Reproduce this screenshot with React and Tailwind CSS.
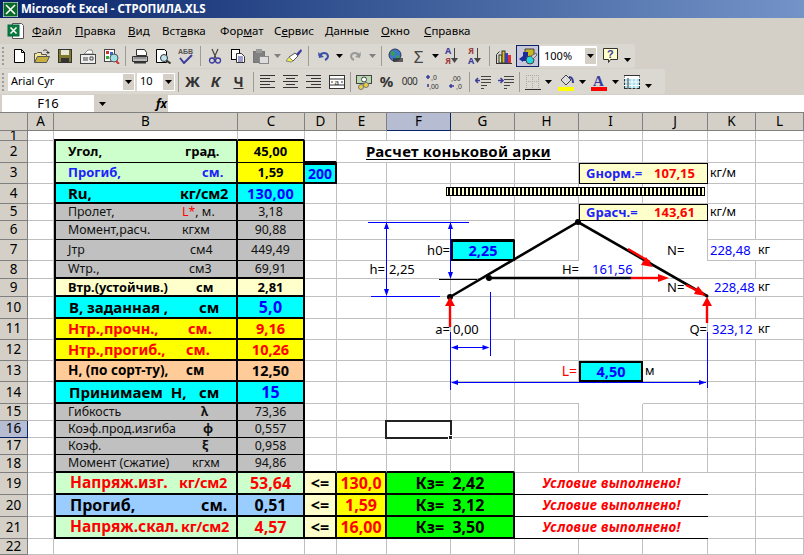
import { twMerge } from "tailwind-merge";

const colsTpl = "grid grid-cols-[28px_26px_184px_67px_32px_50px_64px_64px_64px_64px_65px_48px_48px] grid-rows-[minmax(0,1fr)]";
const letters = ["A", "B", "C", "D", "E", "F", "G", "H", "I", "J", "K", "L"];

const Svg = ({ children, w = 16, h = 16 }) => (
  <svg width={w} height={h} viewBox={"0 0 " + w + " " + h}>{children}</svg>
);

const Caret = ({ className }) => (
  <div className={twMerge("flex items-center justify-center w-[10px]", className)}>
    <svg width="7" height="4" viewBox="0 0 7 4"><path d="M0 0h7l-3.5 4z" fill="#000" /></svg>
  </div>
);
const GrayCaret = ({ className }) => (
  <div className={twMerge("flex items-center justify-center w-[10px]", className)}>
    <svg width="7" height="4" viewBox="0 0 7 4"><path d="M0 0h7l-3.5 4z" fill="#808080" /></svg>
  </div>
);
const Sep = ({ className }) => <div className={twMerge("w-[6px] flex justify-center", className)}><div className="w-px h-[20px] bg-[#a09c94]" /></div>;
const Grip = () => <div className="w-[3px] h-[18px] ml-[2px] border-l-2 border-dotted border-[#a09c94]" />;
const Btn = ({ children, className }) => <div className={twMerge("w-[23px] flex items-center justify-center", className)}>{children}</div>;

const ic = {
  xl: <Svg w={18} h={17}><path d="M5.5 1.5h9l2 2v13h-11z" fill="#fff" stroke="#555" /><rect x="1" y="3" width="11" height="11" fill="#0a7a3a" stroke="#064" /><path d="M3.5 5.5l6 6M9.5 5.5l-6 6" stroke="#fff" strokeWidth="1.5" /></Svg>,
  new: <Svg><path d="M3.5 1.5h7l3 3v10h-10z" fill="#fff" stroke="#000" /><path d="M10.5 1.5v3h3" fill="none" stroke="#000" /></Svg>,
  open: <Svg w={18}><path d="M1.5 14.5v-9h2l1-1h4v2h5v2" fill="#f4e89c" stroke="#555" /><path d="M1.5 14.5l3-6h12l-3 6z" fill="#c8b040" stroke="#555" /><path d="M10 3c2-2 4-1 5 1" fill="none" stroke="#333" /><path d="M13 4h4l-2 2z" fill="#333" /></Svg>,
  save: <Svg><rect x="1.5" y="1.5" width="13" height="13" fill="#807a30" stroke="#333" /><rect x="4" y="2" width="8" height="5" fill="#e8e8d8" /><rect x="4" y="10" width="8" height="4" fill="#333" /></Svg>,
  mail: <Svg w={18}><path d="M5 6l4-4h4l1 4z" fill="#fff" stroke="#888" /><rect x="1.5" y="6.5" width="15" height="9" fill="#eee" stroke="#444" /><path d="M4 10h5M4 12h5M11 9h3v3h-3z" stroke="#444" fill="none" /></Svg>,
  web: <Svg w={18}><rect x="2.5" y="1.5" width="10" height="12" fill="#fff" stroke="#444" /><rect x="4" y="3" width="3" height="3" fill="#c33" /><rect x="8" y="4" width="3" height="3" fill="#36c" /><rect x="4" y="8" width="3" height="3" fill="#3a3" /><circle cx="12" cy="10" r="4" fill="#9fe0e8" stroke="#555" /><path d="M14 13l3 3" stroke="#c33" strokeWidth="2" /></Svg>,
  print: <Svg w={18}><path d="M5.5 1.5h8l2 3v3h-10z" fill="#fff" stroke="#333" /><path d="M1.5 8.5h15v5h-15z" fill="#bbb" stroke="#333" /><path d="M3 14.5h12" stroke="#333" strokeWidth="2" /><path d="M3 10h12" stroke="#666" /></Svg>,
  prev: <Svg w={18}><path d="M2.5 1.5h8l2 2v11h-10z" fill="#fff" stroke="#000" /><circle cx="10" cy="10" r="3.5" fill="#bfe4f0" stroke="#333" /><path d="M12.5 12.5l4 3" stroke="#333" strokeWidth="2" /></Svg>,
  spell: <Svg w={18}><text x="1" y="6" fontSize="7" fontWeight="700" fill="#555" fontFamily="Liberation Sans">АБВ</text><path d="M3 10l4 5 8-8" fill="none" stroke="#3c3c9c" strokeWidth="2" /></Svg>,
  cut: <Svg w={14}><path d="M4 1l4 9M10 1l-4 9" stroke="#444" strokeWidth="1.2" /><circle cx="4" cy="12.5" r="2.5" fill="none" stroke="#3c3c9c" strokeWidth="1.3" /><circle cx="10" cy="12.5" r="2.5" fill="none" stroke="#3c3c9c" strokeWidth="1.3" /></Svg>,
  copy: <Svg><rect x="1.5" y="1.5" width="8" height="10" fill="#fff" stroke="#000" /><path d="M6.5 5.5h5l3 3v6h-8z" fill="#fff" stroke="#333" /><path d="M8 9h5M8 11h5M8 13h5" stroke="#3c3c9c" /></Svg>,
  paste: <Svg w={18}><rect x="1.5" y="3.5" width="11" height="11" fill="#808080" stroke="#777" /><rect x="4" y="1" width="6" height="4" fill="#999" /><rect x="7.5" y="8.5" width="9" height="7" fill="#ddd" stroke="#888" /></Svg>,
  brush: <Svg w={18}><path d="M11 6l5-5 1 2-4 5z" fill="#3c3c9c" /><path d="M4 9l6-4 3 3-5 5z" fill="#fff" stroke="#555" /><path d="M1 13l3-4 4 4-2 1z" fill="#f4f040" stroke="#888" /></Svg>,
  undo: <Svg w={14}><path d="M2 4l1 6 5-1" fill="#3c50a8" /><path d="M3 8c3-4 8-4 9 0 0 2-1 3-3 4" fill="none" stroke="#3c50a8" strokeWidth="2" /></Svg>,
  redo: <Svg w={14}><path d="M12 4l-1 6-5-1" fill="#999" /><path d="M11 8C8 4 3 4 2 8c0 2 1 3 3 4" fill="none" stroke="#999" strokeWidth="2" /></Svg>,
  globe: <Svg w={18}><circle cx="8" cy="7" r="6" fill="#3c78c8" stroke="#335" /><path d="M4 3l4 1-1 4-3-1zM9 8l3-1v3l-2 2z" fill="#3ca03c" /><path d="M6 11h10M6 13h10" stroke="#333" strokeWidth="1.5" /></Svg>,
  chart: <Svg w={18}><path d="M1.5 15.5v-9l3-3" fill="none" stroke="#333" /><rect x="4" y="7" width="3" height="8" fill="#e8e8a0" stroke="#333" /><rect x="7" y="3" width="3" height="12" fill="#d8c020" stroke="#333" /><rect x="10" y="5" width="3" height="10" fill="#3c3cc0" /><rect x="13" y="7" width="3" height="8" fill="#e03030" /><path d="M1 15.5h16" stroke="#333" /></Svg>,
  draw: <Svg w={20} h={20}><path d="M7 3h9v9H7z" fill="#c8b820" stroke="#444" /><path d="M5 6h5v9H5z" fill="#1c2c9c" /><path d="M1 13l4-3v6z" fill="#1c2c9c" /><circle cx="12" cy="14" r="4" fill="#20d8e0" stroke="#444" /><path d="M13 10l5-3 1 2-4 4z" fill="#ccc" stroke="#666" /></Svg>,
  help: <Svg w={18} h={18}><path d="M1.5 1.5h14v11h-7l-2 3v-3h-5z" fill="#ffffc8" stroke="#333" /><text x="5" y="11" fontSize="11" fontWeight="700" fill="#3c3c9c" fontFamily="Liberation Sans">?</text></Svg>,
  sum: <span className="text-[17px] leading-none text-[#444]">Σ</span>,
  alL: <Svg w={15}><path d="M0 1.5h15M0 4.5h10M0 7.5h15M0 10.5h10M0 13.5h15" stroke="#333" /></Svg>,
  alC: <Svg w={15}><path d="M0 1.5h15M3 4.5h9M0 7.5h15M3 10.5h9M0 13.5h15" stroke="#333" /></Svg>,
  alR: <Svg w={15}><path d="M0 1.5h15M5 4.5h10M0 7.5h15M5 10.5h10M0 13.5h15" stroke="#333" /></Svg>,
  merge: <Svg><rect x="0.5" y="1.5" width="15" height="13" fill="#fff" stroke="#333" /><path d="M0 5h16M0 11h16" stroke="#333" /><path d="M2 8h2M12 8h2" stroke="#333" /><text x="5.5" y="10.5" fontSize="8" fill="#333" fontFamily="Liberation Sans">a</text></Svg>,
  cur: <Svg><rect x="0.5" y="1.5" width="15" height="8" fill="#b8d8b0" stroke="#444" /><circle cx="8" cy="5.5" r="2.5" fill="#fff" stroke="#444" /><circle cx="10" cy="11" r="2.5" fill="#e8d040" stroke="#777" /><circle cx="5" cy="13" r="2.5" fill="#e8d040" stroke="#777" /></Svg>,
  incD: <Svg><path d="M3 1v4M1 3h4M3 13v-3" stroke="#3c3c9c" strokeWidth="1.6" /><text x="6" y="6" fontSize="7" fill="#333" fontFamily="Liberation Sans">,0</text><text x="4" y="15" fontSize="7" fill="#333" fontFamily="Liberation Sans">,00</text></Svg>,
  decD: <Svg><path d="M1 12h5M3 10v4" stroke="#3c3c9c" strokeWidth="1.6" /><text x="3" y="7" fontSize="7" fill="#333" fontFamily="Liberation Sans">,00</text><text x="8" y="15" fontSize="7" fill="#333" fontFamily="Liberation Sans">,0</text></Svg>,
  indL: <Svg><path d="M6 2.5h10M6 5.5h10M6 8.5h10M6 11.5h6M6 14.5h3" stroke="#444" /><path d="M1 6.5h4M3 4L0.5 6.5 3 9" fill="none" stroke="#3c3c9c" strokeWidth="1.5" /></Svg>,
  indR: <Svg><path d="M6 2.5h10M6 5.5h10M6 8.5h10M6 11.5h6M6 14.5h3" stroke="#444" /><path d="M0 6.5h4M2.5 4L5 6.5 2.5 9" fill="none" stroke="#3c3c9c" strokeWidth="1.5" /></Svg>,
  bord: <Svg><path d="M1 1.5h14M1 7.5h14M1.5 1v13M7.5 1v13M13.5 1v13" stroke="#aaa" strokeDasharray="1 1" /><path d="M0 15.5h16" stroke="#333" /></Svg>,
  fill: <Svg h={18}><path d="M3 7l5-5 5 5-5 5z" fill="#ddd" stroke="#444" /><path d="M11 4c3 0 4 3 4 6" fill="none" stroke="#3c3c9c" strokeWidth="2" /><rect y="14" width="16" height="4" fill="#ffff00" /></Svg>,
  color: <Svg h={18}><text x="2" y="13" fontSize="15" fontWeight="700" fill="#3c3c9c" fontFamily="Liberation Serif">А</text><rect y="14" width="16" height="4" fill="#ff0000" /></Svg>,
  table: <Svg><rect x="0.5" y="1.5" width="15" height="13" fill="#a8e0f0" stroke="#333" /><path d="M0.5 2h15v2h-15z" fill="#fff" /><path d="M0 4.5h16M0 8h16M0 11.5h16M4 4v11M8 4v11M12 4v11" stroke="#fff" /><path d="M4 4v11" stroke="#333" /></Svg>,
};

const Sort = ({ top, bot, topC, botC }) => (
  <div className="flex items-center">
    <div className="flex flex-col items-center text-[9px] font-bold leading-[10px] font-['Liberation_Serif',serif]">
      <span className={topC}>{top}</span>
      <span className={botC}>{bot}</span>
    </div>
    <svg width="7" height="16" viewBox="0 0 7 16"><path d="M3.5 0v12" stroke="#444" /><path d="M0 10h7l-3.5 5z" fill="#444" /></svg>
  </div>
);

const Combo = ({ text, className }) => (
  <div className={twMerge("h-[18px] bg-white flex items-center justify-between text-[11px] pl-[3px] pr-[1px]", className)}>
    <span>{text}</span>
    <div className="w-[11px] h-[16px] bg-[#d4d0c8] flex items-center justify-center">
      <svg width="7" height="4" viewBox="0 0 7 4"><path d="M0 0h7l-3.5 4z" fill="#000" /></svg>
    </div>
  </div>
);

const Menu = () => {
  const items = [
    ["w-[43px]", "Ф", "айл", ""],
    ["w-[53px]", "П", "равка", ""],
    ["w-[34px]", "В", "ид", ""],
    ["w-[58px]", "", "Вст", "а", "вка"],
    ["w-[54px]", "", "Фор", "м", "ат"],
    ["w-[51px]", "", "С", "е", "рвис"],
    ["w-[56px]", "Д", "анные", ""],
    ["w-[43px]", "О", "кно", ""],
    ["w-[50px]", "С", "правка", ""],
  ];
  return (
    <div className="h-[25px] flex items-center text-[11.5px] text-black">
      <div className="ml-[7px] w-[25px]">{ic.xl}</div>
      {items.map((m, i) => (
        <div key={i} className={m[0]}>
          {m.length === 4 ? <span><u>{m[1]}</u>{m[2]}</span> : <span>{m[2]}<u>{m[3]}</u>{m[4]}</span>}
        </div>
      ))}
    </div>
  );
};

const ToolbarOne = () => (
  <div className="h-[24px] w-[635px] mt-[1px] bg-[#dbd8d1] rounded-r-[3px] flex items-center">
    <Grip />
    <div className="w-[2px]" />
    <Btn>{ic.new}</Btn><Btn>{ic.open}</Btn><Btn>{ic.save}</Btn><Btn>{ic.mail}</Btn><Btn>{ic.web}</Btn>
    <Sep />
    <Btn>{ic.print}</Btn><Btn>{ic.prev}</Btn><Btn>{ic.spell}</Btn>
    <Sep />
    <Btn>{ic.cut}</Btn><Btn>{ic.copy}</Btn><Btn>{ic.paste}</Btn><GrayCaret />
    <Btn>{ic.brush}</Btn>
    <Sep />
    <Btn>{ic.undo}</Btn><Caret /><Btn>{ic.redo}</Btn><GrayCaret className="w-[11px]" />
    <Sep className="w-[7px]" />
    <Btn className="w-[22px]">{ic.globe}</Btn>
    <Btn>{ic.sum}</Btn><Caret />
    <Btn>
      <Sort top="A" bot="Я" topC="text-[#3c3c9c]" botC="text-[#a04040]" />
    </Btn>
    <Btn>
      <Sort top="Я" bot="A" topC="text-[#a04040]" botC="text-[#3c3c9c]" />
    </Btn>
    <Sep />
    <Btn>{ic.chart}</Btn>
    <div className="ml-[1px] w-[23px] h-[22px] border border-[#0a246a] bg-[#c8c6d8] flex items-center justify-center">{ic.draw}</div>
    <Combo text="100%" className="w-[57px] ml-[1px] h-[20px] pl-[4px]" />
    <Btn className="ml-[2px]">{ic.help}</Btn>
    <Caret className="mt-[8px]" />
  </div>
);

const ToolbarTwo = () => (
  <div className="h-[25px] w-[665px] mt-[1px] bg-[#dbd8d1] rounded-r-[3px] flex items-center">
    <Grip />
    <div className="w-[3px]" />
    <Combo text="Arial Cyr" className="w-[127px]" />
    <Combo text="10" className="w-[38px] ml-[2px]" />
    <Sep className="w-[6px]" />
    <Btn className="text-[15px] font-bold text-[#333]">Ж</Btn>
    <Btn className="text-[15px] font-bold italic text-[#333]">К</Btn>
    <Btn className="text-[14px] font-bold underline text-[#333]">Ч</Btn>
    <Sep className="w-[6px]" />
    <Btn>{ic.alL}</Btn><Btn>{ic.alC}</Btn><Btn>{ic.alR}</Btn><Btn>{ic.merge}</Btn>
    <Sep className="w-[4px]" />
    <Btn>{ic.cur}</Btn>
    <Btn className="text-[15px] font-bold text-[#333]">%</Btn>
    <Btn className="text-[10px] tracking-[-0.5px] text-[#333]">000</Btn>
    <Btn>{ic.incD}</Btn><Btn>{ic.decD}</Btn>
    <Sep className="w-[4px]" />
    <Btn>{ic.indL}</Btn><Btn>{ic.indR}</Btn>
    <Sep className="w-[4px]" />
    <Btn>{ic.bord}</Btn><Caret className="w-[9px]" />
    <Btn className="ml-[1px]">{ic.fill}</Btn><Caret className="w-[10px]" />
    <Btn>{ic.color}</Btn><Caret />
    <Btn>{ic.table}</Btn><Caret className="mt-[8px]" />
  </div>
);

const FormulaBar = () => (
  <div className="h-[17px] mt-[1px] flex items-center">
    <div className="ml-[2px] w-[92px] h-full bg-white flex items-center justify-center text-[13px]">F16</div>
    <div className="w-[16px] flex justify-center">
      <svg width="7" height="4" viewBox="0 0 7 4"><path d="M0 0h7l-3.5 4z" fill="#000" /></svg>
    </div>
    <div className="w-[58px] text-right pr-[1px] text-[12px] italic font-bold font-['Liberation_Serif',serif]">fx</div>
    <div className="flex-1 h-full bg-white" />
  </div>
);

const Lab = ({ w, a, b, c = "pl-[12px]" }) => (
  <div className={"flex items-center " + c}>
    <span className={w}>{a}</span>
    <span>{b}</span>
  </div>
);
const Unit = ({ children }) => <span className="text-[14.5px] tracking-[-0.3px]">{children}</span>;

const bT = "border-l-2 border-r-2 border-b-2 border-black";
const bt = "border-l-2 border-r-2 border-b border-black";
const cT = "border-r-2 border-b-2 border-black justify-center";
const ct = "border-r-2 border-b border-black justify-center";
const gray = "bg-[#c0c0c0] text-[12.4px] text-[#111]";
const big = "text-[16px] font-bold";
const big2 = "text-[15px] font-bold";
const redLab = "text-[15.5px] font-bold";
const val = "font-bold text-[#0000ff] tracking-[0.2px]";
const box = "border-2 border-black bg-[#00ffff] justify-center";
const cond = "col-span-3 justify-center border-r-0 border-b-black text-[#ff0000] text-[13.5px] font-bold italic tracking-[0.3px]";
const green = "col-span-2 bg-[#00ff00] border-r-2 border-b-2 border-black justify-center text-[16px] font-bold";
const gHead = "col-span-2 bg-[#ffffcc] border border-black pl-[6px] pr-[12px] font-bold justify-between text-[13px]";
const num = "text-[13px] text-[#0000ff] border-r-0";
const lte = "bg-[#ffffcc] border-r-2 border-b-2 border-black justify-center font-bold text-[16px]";
const lim = "bg-[#ffff00] border-r-2 border-b-2 border-black justify-center text-[#ff0000] text-[16px] font-bold";
const none = "border-r-0";
const noB = "border-b-0";

const Kz = ({ v }) => (
  <span>Кз=&nbsp; {v}</span>
);

const rows = [
  { n: 1, h: "h-[10px]", B: { c: "border-b-2 border-b-black" }, C: { c: "border-b-2 border-b-black" } },
  {
    n: 2, h: "h-[22px]",
    B: { c: bt + " bg-[#ccffcc] font-bold text-[13px]", t: <Lab w="w-[117px]" a="Угол," b="град." /> },
    C: { c: ct + " bg-[#ffff00] font-bold text-[13px]", t: "45,00" },
    D: { c: "border-b-2 border-b-black" },
    E: { c: "col-span-4 font-bold text-[15px] pl-[29px] tracking-[0.2px]", t: <span className="underline underline-offset-2">Расчет коньковой арки</span> },
    F: null, G: null, H: null,
  },
  {
    n: 3, h: "h-[21px]",
    B: { c: bT + " bg-[#ccffcc] font-bold text-[13px] text-[#2020ff]", t: <Lab w="w-[134px]" a="Прогиб," b="см." /> },
    C: { c: cT + " bg-[#ffff00] font-bold text-[13px]", t: "1,59" },
    D: { c: box + " border-l-0 text-[#0000ff] font-bold text-[14px]", t: "200" },
    I: { c: gHead + " text-[#2020ff]", t: <><span>Gнорм.=</span><span className="text-[#ff0000]">107,15</span></> },
    J: null,
    K: { c: "pl-[2px] text-[12.4px]", t: "кг/м" },
  },
  {
    n: 4, h: "h-[20px]",
    B: { c: bT + " bg-[#00ffff] font-bold text-[15px]", t: <Lab w="w-[112px]" a="Ru," b={<Unit>кг/см2</Unit>} /> },
    C: { c: cT + " bg-[#00ffff] text-[14.5px] " + val, t: "130,00" },
  },
  {
    n: 5, h: "h-[17px]",
    B: { c: bt + " " + gray, t: <Lab w="w-[114px]" a="Пролет," b={<><span className="text-[#ff0000]">L*</span>, м.</>} /> },
    C: { c: ct + " " + gray, t: "3,18" },
    I: { c: gHead + " text-[#2020ff]", t: <><span>Gрасч.=</span><span className="text-[#ff0000]">143,61</span></> },
    J: null,
    K: { c: "pl-[2px] text-[12.4px]", t: "кг/м" },
  },
  {
    n: 6, h: "h-[19px]",
    B: { c: bt + " " + gray, t: <Lab w="w-[114px]" a="Момент,расч." b="кгхм" /> },
    C: { c: ct + " " + gray, t: "90,88" },
    G: { c: "border-b-black" },
    H: { c: noB }, I: { c: noB }, J: { c: noB },
  },
  {
    n: 7, h: "h-[21px]",
    B: { c: bt + " " + gray, t: <Lab w="w-[122px]" a="Jтр" b="см4" /> },
    C: { c: ct + " " + gray, t: "449,49" },
    F: { c: "justify-end text-[13px]", t: "h0=" },
    G: { c: box + " text-[#0000ff] font-bold text-[14.5px]", t: "2,25" },
    I: { c: noB },
    J: { c: "pl-[24px] text-[13px] border-b-0", t: "N=" },
    K: { c: num + " pl-[2px]", t: "228,48" },
    L: { c: "text-[12.4px] pl-[2px]", t: "кг" },
  },
  {
    n: 8, h: "h-[18px]",
    B: { c: bT + " " + gray, t: <Lab w="w-[121px]" a="Wтр.," b="см3" /> },
    C: { c: cT + " " + gray, t: "69,91" },
    E: { c: "justify-end pr-[1px] text-[13px]", t: "h=" },
    F: { c: "pl-[2px] text-[13px]", t: "2,25" },
    H: { c: "justify-end text-[13px] border-r-0", t: "H=" },
    I: { c: "pl-[13px] text-[13px] text-[#0000ff]", t: "161,56" },
    J: { c: none },
  },
  {
    n: 9, h: "h-[18px]",
    B: { c: bT + " bg-[#ffffcc] font-bold text-[12.8px]", t: <Lab w="w-[128px]" a="Втр.(устойчив.)" b="см" /> },
    C: { c: cT + " bg-[#ffffcc] font-bold text-[13px]", t: "2,81" },
    J: { c: "pl-[24px] text-[13px] " + none, t: "N=" },
    K: { c: num + " pl-[6px]", t: "228,48" },
    L: { c: "text-[12.4px] pl-[2px]", t: "кг" },
  },
  {
    n: 10, h: "h-[22px]",
    B: { c: bT + " bg-[#00ffff] " + big2, t: <Lab w="w-[130px]" c="pl-[13px]" a="В, заданная ," b="см" /> },
    C: { c: cT + " bg-[#00ffff] text-[16px] " + val, t: "5,0" },
  },
  {
    n: 11, h: "h-[21px]",
    B: { c: bT + " bg-[#ffff00] font-bold text-[14.5px] text-[#ff0000]", t: <Lab w="w-[120px]" a="Нтр.,прочн.," b="см." /> },
    C: { c: cT + " bg-[#ffff00] font-bold text-[14.5px] text-[#ff0000]", t: "9,16" },
    F: { c: "justify-end text-[13px]", t: "a=" },
    G: { c: "pl-[2px] text-[13px] " + none, t: "0,00" },
    J: { c: "justify-end text-[13px]", t: "Q=" },
    K: { c: num + " pl-[4px]", t: "323,12" },
    L: { c: "text-[12.4px] pl-[2px]", t: "кг" },
  },
  {
    n: 12, h: "h-[21px]",
    B: { c: bT + " bg-[#ffff00] font-bold text-[14.5px] text-[#ff0000]", t: <Lab w="w-[118px]" a="Нтр.,прогиб.," b="см." /> },
    C: { c: cT + " bg-[#ffff00] font-bold text-[14.5px] text-[#ff0000]", t: "10,26" },
  },
  {
    n: 13, h: "h-[21px]",
    B: { c: bT + " bg-[#ffcc99] font-bold text-[13.5px]", t: <Lab w="w-[118px]" a="Н, (по сорт-ту)," b="см" /> },
    C: { c: cT + " bg-[#ffcc99] font-bold text-[14.5px]", t: "12,50" },
    H: { c: "justify-end text-[#ff0000] text-[14px] pr-[1px]", t: "L=" },
    I: { c: box + " text-[14.5px] text-[#0000ff] font-bold", t: "4,50" },
    J: { c: "pl-[2px] text-[12.4px]", t: "м" },
  },
  {
    n: 14, h: "h-[22px]",
    B: { c: bT + " bg-[#00ffff] " + big2, t: <Lab w="w-[130px]" c="pl-[13px]" a="Принимаем  Н," b="см" /> },
    C: { c: cT + " bg-[#00ffff] text-[16px] " + val, t: "15" },
    H: { c: none },
    I: { c: none + " " + noB },
  },
  {
    n: 15, h: "h-[17px]",
    B: { c: bt + " " + gray, t: <Lab w="w-[133px]" a="Гибкость" b={<b>λ</b>} /> },
    C: { c: ct + " " + gray, t: "73,36" },
  },
  {
    n: 16, h: "h-[17px]",
    B: { c: bt + " " + gray, t: <Lab w="w-[135px]" a="Коэф.прод.изгиба" b={<b>φ</b>} /> },
    C: { c: ct + " " + gray, t: "0,557" },
    F: { c: "relative", t: <div className="absolute -left-[2px] -top-[1px] w-[67px] h-[19px] border-[2px] border-[#222]"><div className="absolute -right-[3px] -bottom-[3px] w-[5px] h-[5px] bg-[#222] border border-white" /></div> },
  },
  {
    n: 17, h: "h-[17px]",
    B: { c: bt + " " + gray, t: <Lab w="w-[134px]" a="Коэф." b={<b>ξ</b>} /> },
    C: { c: ct + " " + gray, t: "0,958" },
  },
  {
    n: 18, h: "h-[18px]",
    B: { c: bT + " " + gray, t: <Lab w="w-[124px]" a="Момент (сжатие)" b="кгхм" /> },
    C: { c: cT + " " + gray, t: "94,86" },
    D: { c: "border-b-2 border-b-black" },
    E: { c: "border-b-2 border-b-black" },
    F: { c: "border-b-2 border-b-black" },
    G: { c: "border-b-2 border-b-black" },
  },
  {
    n: 19, h: "h-[22px]",
    B: { c: bT + " bg-[#ccffcc] text-[#ff0000] " + redLab, t: <Lab w="w-[109px]" c="pl-[14px]" a="Напряж.изг." b={<Unit>кг/см2</Unit>} /> },
    C: { c: cT + " bg-[#ccffcc] text-[#ff0000] " + big, t: "53,64" },
    D: { c: lte, t: "<=" },
    E: { c: lim, t: "130,0" },
    F: { c: green, t: <Kz v="2,42" /> },
    G: null,
    H: { c: cond, t: "Условие выполнено!" },
    I: null, J: null,
  },
  {
    n: 20, h: "h-[22px]",
    B: { c: bT + " bg-[#99ccff] " + big, t: <Lab w="w-[131px]" c="pl-[14px]" a="Прогиб," b="см." /> },
    C: { c: cT + " bg-[#99ccff] " + big, t: "0,51" },
    D: { c: lte, t: "<=" },
    E: { c: lim, t: "1,59" },
    F: { c: green, t: <Kz v="3,12" /> },
    G: null,
    H: { c: cond, t: "Условие выполнено!" },
    I: null, J: null,
  },
  {
    n: 21, h: "h-[22px]",
    B: { c: bT + " bg-[#ccffcc] text-[#ff0000] " + redLab, t: <Lab w="w-[111px]" c="pl-[14px]" a="Напряж.скал." b={<Unit>кг/см2</Unit>} /> },
    C: { c: cT + " bg-[#ccffcc] text-[#ff0000] " + big, t: "4,57" },
    D: { c: lte, t: "<=" },
    E: { c: lim, t: "16,00" },
    F: { c: green, t: <Kz v="3,50" /> },
    G: null,
    H: { c: cond, t: "Условие выполнено!" },
    I: null, J: null,
  },
  { n: 22, h: "h-[16px]" },
];

const hdrBase = "flex items-center justify-center bg-[#d4d0c8] border-r border-b border-[#808080] text-[13.5px] text-black";
const hdrSel = "bg-[#b6bdd2] border-[#0a246a]";

const HeaderRow = () => (
  <div className={colsTpl + " h-[18px]"}>
    <div className={hdrBase} />
    {letters.map((l) => (
      <div key={l} className={twMerge(hdrBase, l === "F" && hdrSel)}>{l}</div>
    ))}
  </div>
);

const Row = ({ row }) => (
  <div className={colsTpl + " " + row.h}>
    <div className={twMerge(hdrBase, row.n === 1 && "overflow-hidden", row.n === 16 && hdrSel)}>{row.n}</div>
    {letters.map((l) => {
      const cell = row[l];
      if (cell === null) return null;
      return (
        <div
          key={l}
          className={twMerge("flex items-center whitespace-pre border-r border-b border-[#c0c0c0] bg-white text-black", cell?.c)}
        >
          {cell?.t}
        </div>
      );
    })}
  </div>
);

const blue = "#0000ff";
const red = "#ff0000";

const Diagram = () => (
  <svg className="absolute left-0 top-0 pointer-events-none" width="804" height="442" viewBox="0 113 804 442">
    <defs>
      <pattern id="hatch" width="4" height="8" patternUnits="userSpaceOnUse">
        <rect width="4" height="8" fill="#ffffcc" />
        <rect width="2" height="8" fill="#000" />
      </pattern>
    </defs>
    <rect x="446.5" y="187.5" width="258" height="8" fill="url(#hatch)" stroke="#000" />

    <g stroke={blue} fill="none">
      <path d="M368 222.5h101M371 296.5h69" />
      <path d="M386.5 224v70M450.5 224v54" />
      <path d="M450.5 332v58M707.5 332v56M490.5 292v64" />
      <path d="M452 347.5h36M452 382.5h254" />
    </g>
    <g fill={blue}>
      <path d="M386.5 222l-2.5 7h5zM386.5 296l-2.5-7h5z" />
      <path d="M450.5 222l-2.5 7h5zM450.5 279l-2.5-7h5z" />
      <path d="M451 347.5l7-2.5v5zM489.5 347.5l-7-2.5v5z" />
      <path d="M451 382.5l7-2.5v5zM706 382.5l-7-2.5v5z" />
    </g>

    <path d="M439 279.5h38" stroke="#000" />
    <path d="M450 297L578 222L707 296" fill="none" stroke="#000" strokeWidth="2.6" />
    <path d="M489 278H631" stroke="#000" strokeWidth="2.6" />
    <circle cx="450" cy="297" r="3" fill="#000" />
    <circle cx="578" cy="222" r="3" fill="#000" />
    <circle cx="489" cy="278" r="3" fill="#000" />
    <circle cx="707" cy="296" r="1.5" fill="#000" />

    <g stroke={red} strokeWidth="2.4" fill="none">
      <path d="M628 249L650 262" />
      <path d="M631 278H660" />
      <path d="M686 285L700 292" />
      <path d="M450 327V304" />
      <path d="M707 323V304" />
    </g>
    <g fill={red}>
      <path d="M653 267L641 265L646 257z" />
      <path d="M669 278L658 274V282z" />
      <path d="M706 296L694 294L698 286z" />
      <path d="M450 297L445 306H455z" />
      <path d="M707 297L702 306H712z" />
    </g>
  </svg>
);

export default function App() {
  return (
    <div className="w-[804px] h-[555px] overflow-hidden bg-[#d4d0c8] font-['Liberation_Sans',sans-serif] text-black">
      <div className="h-[18px] bg-linear-to-r from-[#0a246a] to-[#7494c8] flex items-center text-white font-bold text-[11.5px]">
        <div className="w-[21px] pl-[3px]">
          <svg width="15" height="15" viewBox="0 0 15 15">
            <rect width="15" height="15" fill="#0a6a2a" stroke="#fff" />
            <path d="M3 3l9 9M12 3l-9 9" stroke="#fff" strokeWidth="1.6" />
          </svg>
        </div>
        Microsoft Excel - СТРОПИЛА.XLS
      </div>
      <Menu />
      <ToolbarOne />
      <ToolbarTwo />
      <FormulaBar />
      <div className="relative border-t border-[#808080] leading-none">
        <HeaderRow />
        {rows.map((r) => <Row key={r.n} row={r} />)}
        <Diagram />
      </div>
    </div>
  );
}
